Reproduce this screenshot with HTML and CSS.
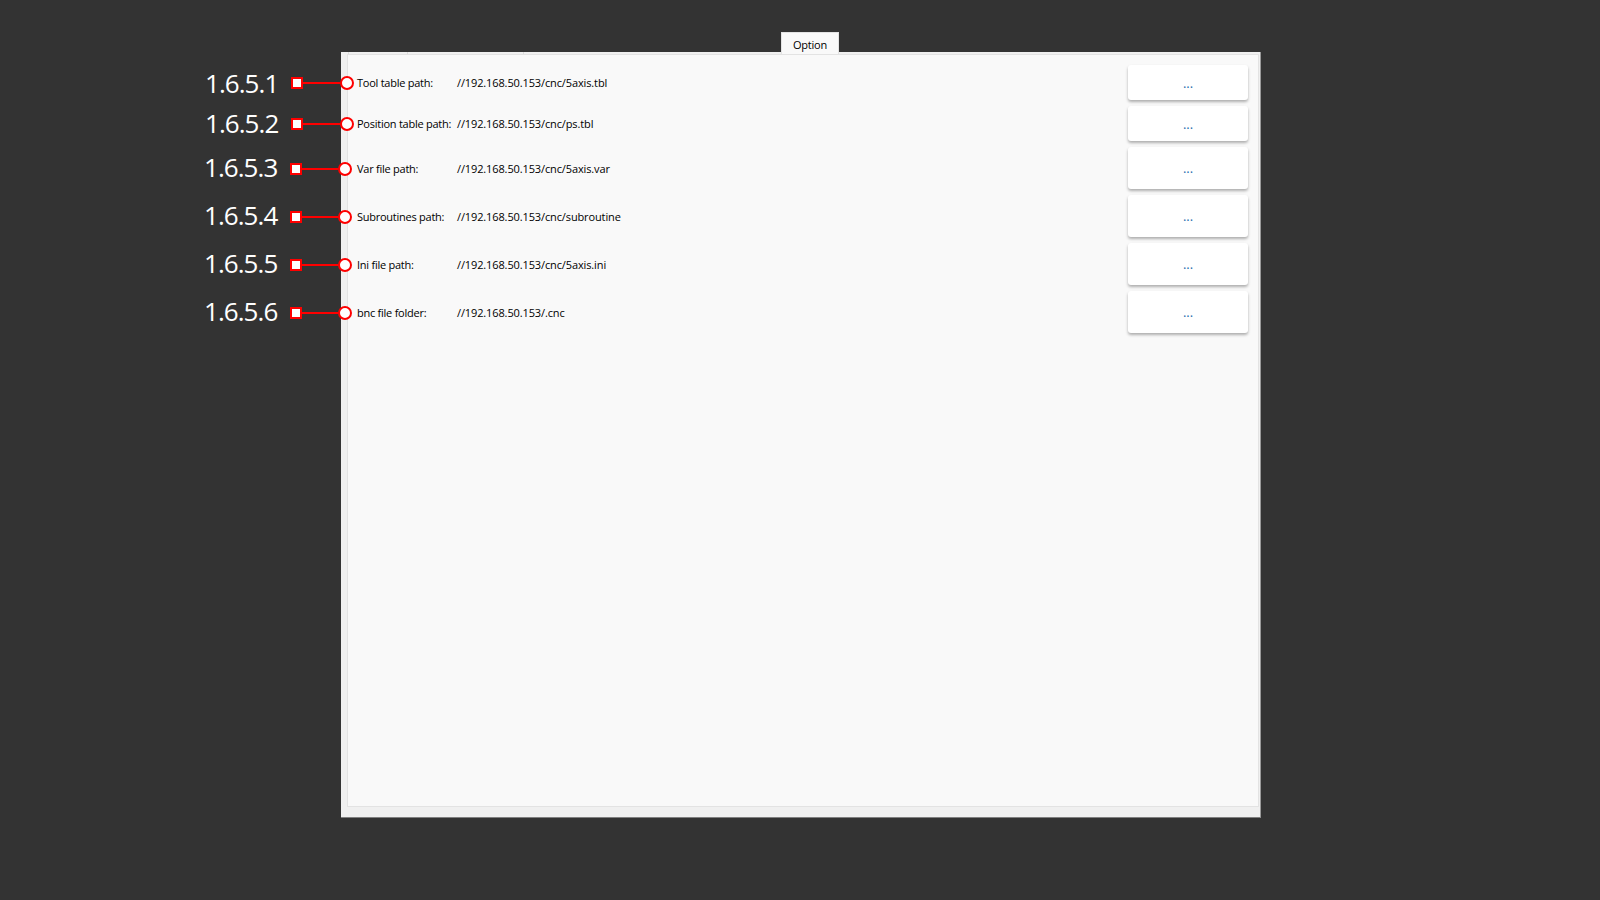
FILE: index.html
```html
<!DOCTYPE html>
<html lang="en">
<head>
<meta charset="utf-8">
<title>Option</title>
<link rel="stylesheet" href="styles.css">
</head>
<body>
<main class="stage">
  <div class="dialog">
    <div class="tabbar"><div class="tab">Option</div></div>
    <section class="panel">
      <div class="pane">
        <div class="row row-a"><span class="label">Tool table path:</span><span class="path">//192.168.50.153/cnc/5axis.tbl</span><button class="browse">...</button></div>
        <div class="row row-a"><span class="label">Position table path:</span><span class="path">//192.168.50.153/cnc/ps.tbl</span><button class="browse">...</button></div>
        <div class="row row-b"><span class="label">Var file path:</span><span class="path">//192.168.50.153/cnc/5axis.var</span><button class="browse">...</button></div>
        <div class="row row-b"><span class="label">Subroutines path:</span><span class="path">//192.168.50.153/cnc/subroutine</span><button class="browse">...</button></div>
        <div class="row row-b"><span class="label">Ini file path:</span><span class="path">//192.168.50.153/cnc/5axis.ini</span><button class="browse">...</button></div>
        <div class="row row-b"><span class="label">bnc file folder:</span><span class="path">//192.168.50.153/.cnc</span><button class="browse">...</button></div>
      </div>
    </section>
  </div>
  <div class="callout c1"><span class="num">1.6.5.1</span><i class="sq"></i><i class="wire"></i><i class="dot"></i></div>
  <div class="callout c2"><span class="num">1.6.5.2</span><i class="sq"></i><i class="wire"></i><i class="dot"></i></div>
  <div class="callout c3"><span class="num">1.6.5.3</span><i class="sq"></i><i class="wire"></i><i class="dot"></i></div>
  <div class="callout c4"><span class="num">1.6.5.4</span><i class="sq"></i><i class="wire"></i><i class="dot"></i></div>
  <div class="callout c5"><span class="num">1.6.5.5</span><i class="sq"></i><i class="wire"></i><i class="dot"></i></div>
  <div class="callout c6"><span class="num">1.6.5.6</span><i class="sq"></i><i class="wire"></i><i class="dot"></i></div>
</main>
</body>
</html>
```
FILE: styles.css
```css
* { box-sizing: border-box; }
html, body { margin: 0; height: 100%; overflow: hidden; }
body { background: #333333; font-family: "Open Sans", "Liberation Sans", sans-serif; }
.stage { position: relative; width: 1600px; height: 900px; padding: 32px 0 0 341px; }
.dialog { width: 920px; display: flex; flex-direction: column; }
.tabbar { display: flex; height: 22px; margin-bottom: -2px; padding-left: 440px; position: relative; z-index: 1; }
.tab { width: 58px; height: 22px; background: #f9f9f9; border: 1px solid #e3e3e3; border-bottom: 0; font-size: 11px; letter-spacing: -.2px; line-height: 24px; text-align: center; color: #000; }
.panel { height: 766px; padding: 2px 1px 10px 6px; border-right: 1px solid #9a9a9a; border-bottom: 1px solid #7f7f7f;
  background-color: #f0f0f0;
  background-image: linear-gradient(#dcdcdc, #dcdcdc), linear-gradient(#dcdcdc, #dcdcdc), linear-gradient(#dcdcdc, #dcdcdc);
  background-size: 1px 2px;
  background-position: 7px 0, 66px 0, 182px 0;
  background-repeat: no-repeat; }
.pane { height: 100%; background: #f9f9f9; border: 1px solid #e3e3e3; padding: 10px 10px 0 9px; display: flex; flex-direction: column; gap: 6px; }
.row { display: flex; align-items: center; font-size: 11px; color: #000; }
.row-a { height: 35px; }
.row-b { height: 42px; }
.label { width: 100px; letter-spacing: -.25px; }
.path { flex: 1; letter-spacing: -.12px; }
.browse { width: 120px; height: 100%; border: 0; border-radius: 3px; background: #fff; box-shadow: 0 2px 3px rgba(0,0,0,.3); font: 13px "Open Sans", sans-serif; color: #2a6fb0; padding: 0; }
.callout { position: absolute; display: flex; align-items: center; height: 30px; }
.num { width: 86px; font-size: 26px; font-weight: 400; letter-spacing: -.95px; color: #fff; line-height: 30px; white-space: nowrap; }
.sq { width: 12px; height: 12px; background: #fff; border: 2px solid #f00; flex: none; }
.wire { width: 37px; height: 2px; background: #f00; flex: none; }
.dot { width: 14px; height: 14px; background: #fff; border: 2px solid #f00; border-radius: 50%; flex: none; }
.c1 { left: 205px; top: 68px; }
.c2 { left: 205px; top: 109px; }
.c3 { left: 204px; top: 154px; }
.c4 { left: 204px; top: 202px; }
.c5 { left: 204px; top: 250px; }
.c6 { left: 204px; top: 298px; }
.c2 .num { margin-bottom: 2px; }
.c3 .num, .c4 .num, .c5 .num, .c6 .num { margin-bottom: 4px; }
.c3 .wire, .c4 .wire, .c5 .wire, .c6 .wire { width: 36px; }
```
